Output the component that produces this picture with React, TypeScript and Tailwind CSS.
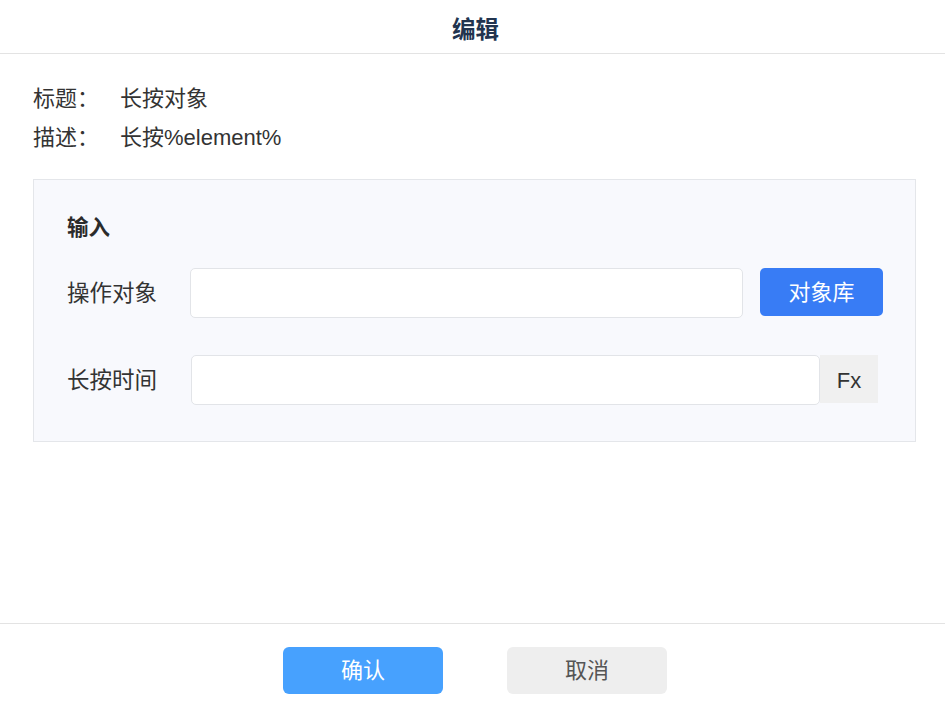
import React from 'react';

const font = { fontFamily: '"Liberation Sans", "Noto Sans CJK SC", sans-serif' };

export default function App() {
  return (
    <div
      className="flex h-[711px] w-full flex-col bg-white text-[#333333] font-['Liberation_Sans','Noto_Sans_CJK_SC',sans-serif]"
      style={font}
    >
      {/* header */}
      <div className="flex h-[54px] shrink-0 items-center justify-center border-b border-[#e3e3e3] pl-[6px] pt-[8px]">
        <h1 className="text-[23.5px] font-bold text-[#22344f]">编辑</h1>
      </div>

      {/* body */}
      <div className="flex-1 pl-[33px] pr-[29px] pt-[25px]">
        <div className="flex text-[22px] leading-[39px] text-[#333333]">
          <span className="w-[87px]">标题：</span>
          <span>长按对象</span>
        </div>
        <div className="flex text-[22px] leading-[39px] text-[#333333]">
          <span className="w-[87px]">描述：</span>
          <span>长按%element%</span>
        </div>

        <div className="mt-[22px] border border-[#e4e6ea] bg-[#f8f9fd] pb-[36px] pl-[33px] pt-[33px]">
          <div className="text-[21.5px] font-bold leading-[30px] text-[#2b2b2b]">输入</div>

          <div className="mt-[25px] flex items-start">
            <label className="w-[123px] pt-[1px] text-[22.5px] leading-[49px]">操作对象</label>
            <input className="h-[50px] w-[553px] rounded-[5px] border border-[#e2e4e8] bg-white px-3 outline-none" />
            <button className="ml-[17px] h-[48px] w-[123px] rounded-[5px] bg-[#387cf5] text-[22px] text-white">
              对象库
            </button>
          </div>

          <div className="mt-[37px] flex items-start">
            <label className="w-[124px] pt-[1px] text-[22.5px] leading-[49px]">长按时间</label>
            <input className="h-[50px] w-[629px] rounded-[5px] border border-[#e2e4e8] bg-white px-3 outline-none" />
            <div className="flex h-[48px] w-[58px] items-center justify-center bg-[#f0f0f0] pt-[2px] text-[22px] text-[#333333]">
              Fx
            </div>
          </div>
        </div>
      </div>

      {/* footer */}
      <div className="flex h-[88px] shrink-0 justify-center gap-[64px] border-t border-[#e3e3e3] pl-[5px] pt-[23px]">
        <button className="h-[47px] w-[160px] rounded-[6px] bg-[#47a1fe] text-[22px] text-white">确认</button>
        <button className="h-[47px] w-[160px] rounded-[6px] bg-[#eeeeee] text-[22px] text-[#555555]">取消</button>
      </div>
    </div>
  );
}
